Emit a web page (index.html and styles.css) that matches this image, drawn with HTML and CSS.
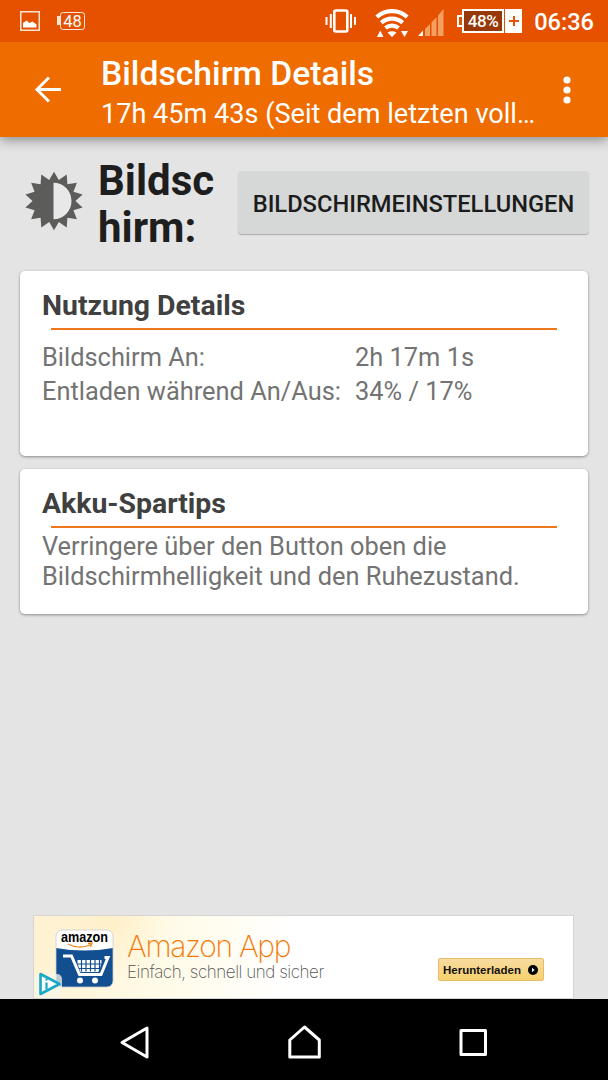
FILE: index.html
```html
<!DOCTYPE html>
<html lang="de">
<head>
  <meta charset="UTF-8" />
  <title>Bildschirm Details</title>
  <link rel="stylesheet" href="styles.css">
</head>
<body>

  <div class="statusbar">
    <svg class="icon-image" width="20" height="20" viewBox="0 0 20 20">
      <rect x=".75" y=".75" width="18.5" height="18.5" fill="none" stroke="#ffe6d2" stroke-width="1.5"/>
      <path d="M3 16.5V12l3.500-2.500L9.500 12l3-1.500 4 3v3z" fill="#fff"/>
    </svg>
    <div class="battery-small"><span>48</span></div>
    <svg class="icon-vibrate" width="32" height="24" viewBox="0 0 32 24">
      <rect x="9.300" y="1.500" width="13" height="21" rx="1.500" fill="none" stroke="#fff" stroke-width="2.600"/>
      <path d="M5.800 5v14M26 5v14M1.500 8v8M30 8v8" stroke="#fff" stroke-width="2"/>
    </svg>
    <svg class="icon-wifi" width="34" height="28" viewBox="0 0 34 28">
      <g fill="none" stroke="#fff" stroke-width="4.200">
        <path d="M1.800 8a22.500 22.500 0 0 1 30.400 0"/>
        <path d="M6.300 13.700a16 16 0 0 1 21.400 0"/>
        <path d="M10.500 19a10 10 0 0 1 13 0"/>
      </g>
      <path d="M12.500 23.500q4.500-2.500 9 0L17 28zM2 28h6.500L5.200 21.500zM26 22h7l-3.500 6z" fill="#fff"/>
    </svg>
    <svg class="icon-signal" width="26" height="27" viewBox="0 0 26 27">
      <path d="M7 20l5-5V27H7zM13.500 13.500l5-5.500V27h-5zM20 6.500l5.500-6.500V27H20z" fill="#f5a063"/>
      <path d="M0 27l5-5.500V27z" fill="#fff"/>
    </svg>
    <div class="battery">
      <span class="battery-cap"></span>
      <span class="battery-level">48%</span>
      <span class="battery-plus"></span>
    </div>
    <span class="clock">06:36</span>
  </div>

  <div class="appbar">
    <svg class="icon-back" width="28" height="28" viewBox="0 0 28 28">
      <path d="M27 13.500H3M15 1.500L3 13.500l12 12" fill="none" stroke="#fff" stroke-width="3"/>
    </svg>
    <div class="titles">
      <h1>Bildschirm Details</h1>
      <p>17h 45m 43s (Seit dem letzten voll…</p>
    </div>
    <svg class="icon-more" width="8" height="28" viewBox="0 0 8 28">
      <circle cx="4" cy="4" r="3.600"/><circle cx="4" cy="14" r="3.600"/><circle cx="4" cy="24" r="3.600"/>
    </svg>
  </div>

  <div class="content">
    <div class="head">
      <svg class="icon-sun" width="60" height="60" viewBox="0 0 60 60">
        <polygon fill="#5c5c5a" points="30,.7 34.8,9.1 42.7,3.6 43.4,13.2 52.9,11.7 49.4,20.7 58.6,23.5 51.5,30 58.6,36.5 49.4,39.3 52.9,48.3 43.4,46.8 42.7,56.4 34.8,50.9 30,59.3 25.2,50.9 17.3,56.4 16.6,46.8 7.1,48.3 10.6,39.3 1.4,36.5 8.5,30 1.4,23.5 10.6,20.7 7.1,11.7 16.6,13.2 17.3,3.6 25.2,9.1"/>
        <path d="M29.500 11.700a18 18.300 0 0 1 0 36.600z" fill="#e8e8e8"/>
      </svg>
      <h2>Bildsc<br>hirm:</h2>
      <button class="settings">BILDSCHIRMEINSTELLUNGEN</button>
    </div>

    <div class="card usage">
      <h3>Nutzung Details</h3>
      <div class="table">
        <span>Bildschirm An:</span><span>2h 17m 1s</span>
        <span>Entladen während An/Aus:</span><span>34% / 17%</span>
      </div>
    </div>

    <div class="card tips">
      <h3>Akku-Spartips</h3>
      <p>Verringere über den Button oben die Bildschirmhelligkeit und den Ruhezustand.</p>
    </div>

    <div class="ad">
      <svg class="ad-logo" width="80" height="82" viewBox="0 -8 80 82">
        <defs>
          <clipPath id="tile"><rect x="22" y="6" width="57" height="57" rx="6"/></clipPath>
        </defs>
        <g clip-path="url(#tile)">
          <rect x="22" y="6" width="57" height="57" fill="#fff"/>
          <path d="M22 24q28 5 57 0v39H22z" fill="#124f91"/>
        </g>
        <rect x="22" y="6" width="57" height="57" rx="6" fill="none" stroke="#c9cbd0" stroke-width=".8"/>
        <text class="brand" x="27" y="18" textLength="47" lengthAdjust="spacingAndGlyphs">amazon</text>
        <path d="M34 20q11 6 23 .5M54 19.500l4-.5-1.500 4" fill="none" stroke="#f08a1c" stroke-width="1.300"/>
        <path d="M29 32h8.500l8 18.500H67l7-17h-3.500" fill="none" stroke="#fff" stroke-width="3"/>
        <path d="M43.500 36v3.500l3 8.500h18l3-8.500V36z" fill="#fff"/>
        <path d="M43 40h26M45 44.500h23M47.500 35v12.500M52 35v12.500M56.500 35v12.500M61 35v12.500M65.500 35v12.500" stroke="#124f91" stroke-width="1.200"/>
        <circle cx="46" cy="56.500" r="3" fill="#fff"/>
        <circle cx="61" cy="56.500" r="3" fill="#fff"/>
        <rect x="0" y="50" width="28" height="24" rx="5" fill="#f5f5ea" opacity=".75"/>
        <path d="M6.500 50v20l19-10z" fill="#fff" stroke="#19a9c6" stroke-width="2.600" stroke-linejoin="round"/>
        <path d="M12.500 58.500v7M12.500 54.500v2" stroke="#19a9c6" stroke-width="2.200"/>
      </svg>
      <div class="ad-text">
        <div class="ad-title">Amazon App</div>
        <div class="ad-sub">Einfach, schnell und sicher</div>
      </div>
      <div class="ad-button">
        <span>Herunterladen</span>
        <svg width="10" height="10" viewBox="0 0 10 10">
          <circle cx="5" cy="5" r="5"/>
          <path d="M4 2.800L6.600 5 4 7.200z" fill="#fff"/>
        </svg>
      </div>
    </div>
  </div>

  <div class="navbar">
    <svg width="34" height="38" viewBox="0 0 34 38"><path d="M29 5v29L4 19.500z"/></svg>
    <svg width="36" height="38" viewBox="0 0 36 38"><path d="M3.800 34V17L18.500 4l14.800 13v17z"/></svg>
    <svg width="34" height="38" viewBox="0 0 34 38"><path d="M5 7.500h24.500v24H5z"/></svg>
  </div>

</body>
</html>
```
FILE: styles.css
```css
* {
  box-sizing: border-box;
}
body {
  margin: 0;
  height: 1080px;
  display: flex;
  flex-direction: column;
  overflow: hidden;
  background: #e4e4e4;
  font-family: Roboto, sans-serif;
}
h1, h2, h3, p {
  margin: 0;
}
svg {
  display: block;
  flex: none;
}

/* status bar */
.statusbar {
  height: 42px;
  flex: none;
  display: flex;
  align-items: center;
  padding: 0 14px 0 20px;
  background: #e65100;
  color: #fff;
  position: relative;
  z-index: 2;
}
.battery-small {
  width: 25px;
  height: 18px;
  margin-left: 20px;
  border: 1.5px solid #ffe6d2;
  border-radius: 3px;
  font-size: 16.5px;
  line-height: 17px;
  text-align: center;
  position: relative;
}
.battery-small::before {
  content: "";
  position: absolute;
  left: -4px;
  top: 3px;
  width: 3px;
  height: 9px;
  background: #ffe6d2;
}
.icon-vibrate {
  margin-left: auto;
}
.icon-wifi {
  margin: 4px 0 0 18px;
}
.icon-signal {
  margin: 2px 0 0 9px;
}
.battery {
  display: flex;
  align-items: center;
  height: 24px;
  margin-left: 13px;
}
.battery-cap {
  width: 5px;
  height: 12px;
  border: 2px solid #fff;
  border-right: 0;
}
.battery-level {
  width: 42px;
  height: 24px;
  border: 2px solid #fff;
  background: #963808;
  font-size: 17px;
  font-weight: 500;
  line-height: 20px;
  letter-spacing: -0.3px;
  text-align: center;
}
.battery-plus {
  width: 17px;
  height: 24px;
  margin-left: 1px;
  background:
    linear-gradient(#e65100, #e65100) center / 10px 2px no-repeat,
    linear-gradient(#e65100, #e65100) center / 2px 10px no-repeat,
    #fff;
}
.clock {
  margin-left: 12px;
  padding-top: 2px;
  font-size: 23.6px;
  font-weight: 500;
}

/* app bar */
.appbar {
  height: 95px;
  flex: none;
  display: flex;
  align-items: center;
  padding: 0 37px 0 34px;
  background: #ef6c00;
  color: #fff;
  box-shadow: 0 2px 12px rgba(0,0,0,0.45);
  z-index: 1;
}
.titles {
  margin: 4px 0 0 39px;
  white-space: nowrap;
}
.titles h1 {
  font-size: 33.7px;
  font-weight: 500;
  line-height: 40px;
}
.titles p {
  font-size: 27.1px;
  line-height: 32px;
  margin-top: 4px;
}
.icon-more {
  margin-left: auto;
  fill: #fff;
}

/* content */
.content {
  flex: 1;
  display: flex;
  flex-direction: column;
  padding: 20px 20px 0;
  overflow: hidden;
}
.head {
  display: flex;
  height: 114px;
}
.icon-sun {
  margin: 14px 0 0 4px;
}
.head h2 {
  width: 139px;
  margin-left: 14px;
  font-size: 42px;
  line-height: 47px;
  color: #1e1e1e;
}
.settings {
  width: 351px;
  height: 63px;
  margin: 14px -1px 0 1px;
  padding: 2px 0 0;
  border: 0;
  border-radius: 4px;
  background: #d6d8d7;
  box-shadow: 0 1px 1px rgba(0,0,0,0.25);
  font-family: inherit;
  font-size: 23.7px;
  font-weight: 500;
  color: #1c1c1c;
}
.card {
  padding: 16px 22px;
  background: #fff;
  border-radius: 5px;
  box-shadow: 0 1px 3px rgba(0,0,0,0.4);
  font-size: 25.4px;
  color: #737373;
}
.card h3 {
  font-size: 28.4px;
  line-height: 38px;
  color: #404040;
}
.card h3::after {
  content: "";
  display: block;
  height: 2px;
  margin: 3px 9px 0;
  background: #ee761c;
}
.usage {
  height: 185px;
  margin-bottom: 13px;
}
.table {
  display: grid;
  grid-template-columns: 313px 1fr;
  line-height: 34.5px;
  margin-top: 9.5px;
  white-space: nowrap;
}
.tips {
  height: 145px;
}
.tips p {
  line-height: 29.5px;
  margin-top: 4px;
}

/* ad banner */
.ad {
  width: 541px;
  height: 84px;
  margin: auto 0 0 13px;
  display: flex;
  border: 1px solid #d5d5d5;
  background: radial-gradient(circle at 75px 0, #ffefc8, transparent 60px), linear-gradient(100deg, #fff1d0, #fffbe8 25%, #fff 48%);
}
.brand {
  font-family: "Liberation Sans", sans-serif;
  font-weight: bold;
  font-size: 14px;
}
.ad-text {
  margin-left: 13px;
  font-family: Inter, sans-serif;
  font-weight: 200;
  white-space: nowrap;
}
.ad-title {
  margin-top: 12px;
  font-size: 30px;
  line-height: 36px;
  letter-spacing: -1.3px;
  color: #f5790a;
}
.ad-sub {
  margin-top: -1px;
  font-size: 17px;
  line-height: 18px;
  letter-spacing: -0.45px;
  color: #555;
}
.ad-button {
  width: 106px;
  height: 23px;
  margin: 42px 29px 0 auto;
  padding: 0 5px 0 4px;
  display: flex;
  align-items: center;
  justify-content: space-between;
  border: 1px solid #e5bd6a;
  border-radius: 2px;
  background: linear-gradient(#f8dca0, #f7d06c);
  font: bold 11.5px "Liberation Sans", sans-serif;
  color: #111;
}

/* navigation bar */
.navbar {
  height: 81px;
  flex: none;
  display: flex;
  align-items: center;
  justify-content: space-between;
  padding: 4px 118px 0;
  background: #000;
}
.navbar path {
  fill: none;
  stroke: #fff;
  stroke-width: 3;
  stroke-linejoin: round;
}
```
